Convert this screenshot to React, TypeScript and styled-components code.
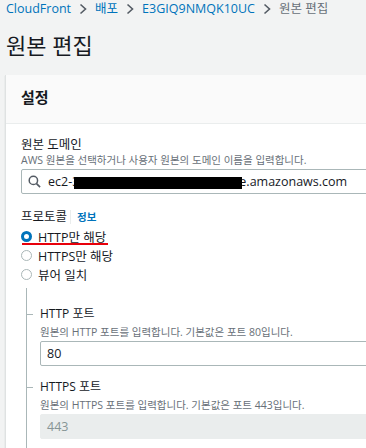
import React from "react";
import styled, { createGlobalStyle } from "styled-components";

const Global = createGlobalStyle`
  html, body { margin: 0; padding: 0; background: #f2f3f3; overflow: hidden; }
  body { font-family: "Open Sans", "Noto Sans CJK KR", sans-serif; color: #16191f; }
  * { box-sizing: border-box; }
`;

const Page = styled.div`
  width: 366px;
  height: 448px;
  overflow: hidden;
  display: flex;
  flex-direction: column;
`;

const Crumbs = styled.nav`
  display: flex;
  align-items: center;
  gap: 8px;
  height: 17px;
  padding: 0 6px;
  font-size: 12.5px;
  line-height: 17px;
  white-space: nowrap;
`;

const Crumb = styled.span<{ $current?: boolean }>`
  color: ${(p) => (p.$current ? "#687078" : "#0073bb")};
`;

const Sep = () => (
  <svg width="8" height="12" viewBox="0 0 8 12">
    <path d="M1.5 1.5 L6.5 6 L1.5 10.5" fill="none" stroke="#545b64" strokeWidth="1.6" />
  </svg>
);

const Title = styled.h1`
  margin: 14px 0 0 6px;
  font-size: 22px;
  line-height: 28px;
  font-weight: 400;
`;

const Card = styled.section`
  margin: 16px -60px 0 5px;
  background: #fff;
  border-left: 1px solid #dfe2e2;
  box-shadow: 0 1px 1px rgba(0, 28, 36, 0.2);
  flex: 1;
`;

const CardHeader = styled.header`
  padding: 12px 15px 16px;
  background: #fafafa;
  border-bottom: 1px solid #eaeded;
  font-size: 15px;
  line-height: 20px;
  font-weight: 700;
`;

const CardBody = styled.div`
  padding: 12px 0 0 15px;
  display: flex;
  flex-direction: column;
`;

const Label = styled.div<{ $gap?: number }>`
  font-size: 12.5px;
  line-height: 18px;
  display: flex;
  align-items: center;
  margin-top: ${(p) => p.$gap ?? 0}px;
`;

const Desc = styled.div<{ $gap?: number }>`
  font-size: 10.5px;
  line-height: 14px;
  color: #687078;
  margin-top: ${(p) => p.$gap ?? -1}px;
`;

const InputBox = styled.div<{ $disabled?: boolean }>`
  margin-top: 2px;
  height: 25px;
  border: 1px solid ${(p) => (p.$disabled ? "#eaeded" : "#aab7b8")};
  background: ${(p) => (p.$disabled ? "#eaeded" : "#fff")};
  color: ${(p) => (p.$disabled ? "#879596" : "#16191f")};
  border-radius: 2px;
  display: flex;
  align-items: center;
  padding-left: 6px;
  gap: 7px;
  font-size: 12.5px;
  white-space: nowrap;
`;

const Redact = styled.span`
  display: inline-block;
  width: 168px;
  height: 12px;
  margin-left: -5px;
  margin-right: -3px;
  background: #000;
  vertical-align: middle;
  position: relative;
`;

const InfoDivider = styled.span`
  width: 1px;
  height: 14px;
  background: #eaeded;
  margin: 0 6px 0 3px;
`;

const Info = styled.span`
  color: #0073bb;
  font-size: 10.5px;
  font-weight: 700;
`;

const RadioGroup = styled.div`
  display: flex;
  flex-direction: column;
  margin-top: 1px;
`;

const RadioRow = styled.label`
  position: relative;
  display: flex;
  align-items: center;
  gap: 6px;
  height: 19px;
  font-size: 12.5px;
`;

const RadioDot = styled.span<{ $checked?: boolean }>`
  width: 11px;
  height: 11px;
  border-radius: 50%;
  border: ${(p) => (p.$checked ? "3.5px solid #0073bb" : "1.5px solid #aab7b8")};
  background: #fff;
  flex: none;
`;

const Annot = styled.span`
  position: absolute;
  left: 1px;
  top: 16px;
  width: 86px;
  height: 1.5px;
  background: #e8000b;
`;

const Nested = styled.div`
  margin: 4px 0 0 5px;
  border-left: 1px solid #aab7b8;
  padding: 16px 0 20px 13px;
  display: flex;
  flex-direction: column;
`;

const Field = styled.div`
  display: flex;
  flex-direction: column;
  & + & {
    margin-top: 11px;
  }
`;

const SubLabel = styled.div`
  position: relative;
  font-size: 12px;
  line-height: 20px;
  &::before {
    content: "";
    position: absolute;
    left: -14px;
    top: 10px;
    width: 7px;
    height: 1px;
    background: #aab7b8;
  }
`;

export default function App() {
  return (
    <Page>
      <Global />
      <Crumbs>
        <Crumb>CloudFront</Crumb>
        <Sep />
        <Crumb>배포</Crumb>
        <Sep />
        <Crumb>E3GIQ9NMQK10UC</Crumb>
        <Sep />
        <Crumb $current>원본 편집</Crumb>
      </Crumbs>
      <Title>원본 편집</Title>
      <Card>
        <CardHeader>설정</CardHeader>
        <CardBody>
          <Label>원본 도메인</Label>
          <Desc>AWS 원본을 선택하거나 사용자 원본의 도메인 이름을 입력합니다.</Desc>
          <InputBox>
            <svg width="13" height="13" viewBox="0 0 14 14">
              <circle cx="5.8" cy="5.8" r="4.5" fill="none" stroke="#545b64" strokeWidth="1.6" />
              <path d="M9.2 9.2 L13 13" stroke="#545b64" strokeWidth="1.8" />
            </svg>
            <span>
              ec2-3<Redact />e.amazonaws.com
            </span>
          </InputBox>
          <Label $gap={14}>
            프로토콜
            <InfoDivider />
            <Info>정보</Info>
          </Label>
          <RadioGroup>
            <RadioRow>
              <RadioDot $checked />
              HTTP만 해당
              <Annot />
            </RadioRow>
            <RadioRow>
              <RadioDot />
              HTTPS만 해당
            </RadioRow>
            <RadioRow>
              <RadioDot />
              뷰어 일치
            </RadioRow>
          </RadioGroup>
          <Nested>
            <Field>
              <SubLabel>HTTP 포트</SubLabel>
              <Desc $gap={1}>원본의 HTTP 포트를 입력합니다. 기본값은 포트 80입니다.</Desc>
              <InputBox>80</InputBox>
            </Field>
            <Field>
              <SubLabel>HTTPS 포트</SubLabel>
              <Desc $gap={1}>원본의 HTTPS 포트를 입력합니다. 기본값은 포트 443입니다.</Desc>
              <InputBox $disabled>443</InputBox>
            </Field>
          </Nested>
        </CardBody>
      </Card>
    </Page>
  );
}
